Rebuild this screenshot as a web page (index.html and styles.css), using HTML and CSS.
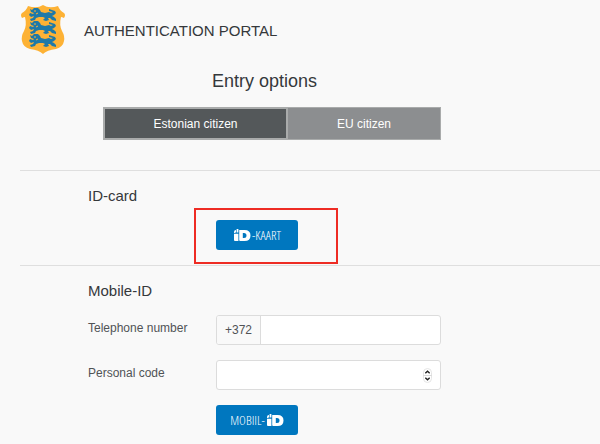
FILE: index.html
```html
<!DOCTYPE html>
<html lang="en">
<head>
<meta charset="utf-8">
<meta name="viewport" content="width=device-width, initial-scale=1">
<title>Authentication portal</title>
<link rel="stylesheet" href="styles.css">
</head>
<body>
<svg class="defs" aria-hidden="true">
  <symbol id="lion" viewBox="0 0 28 13">
    <path d="M1 1 L3 2 L5 0 L9 0 L11 2 L12 4 L16 5 L20 4 L22 5 L24 4 L20 3 L20 1 L23 2 L26 3 L27 5 L25 7 L23 8 L25 9 L27 11 L27 13 L23 12 L21 10 L19 10 L20 12 L17 13 L14 12 L16 10 L14 9 L10 9 L7 10 L6 12 L2 13 L1 11 L4 10 L5 8 L2 9 L0 7 L1 5 L4 6 L5 5 L2 4 Z"/>
    <path class="lion-line" d="M5 3 L7 3 M7 6 L9 5"/>
  </symbol>
  <symbol id="id-mark" viewBox="0 0 18 12">
    <path d="M1 3 Q1 1 3 1 V3 Q3 4 1 4 Z M3.600 0 H5.400 V3.400 H3.600 Z M1 4.800 H5.400 V12 H2 Q1 12 1 11 Z"/>
    <path fill-rule="evenodd" d="M6.200 1 H11.500 Q17.500 1 17.500 6.500 Q17.500 12 11.500 12 H7.200 Q6.200 12 6.200 11 Z M9.800 4 V9 H11 Q13.500 9 13.500 6.500 Q13.500 4 11 4 Z"/>
  </symbol>
</svg>
<header class="header">
  <svg class="crest" viewBox="0 0 46 50" aria-hidden="true">
    <path d="M8 1 Q17 4 23 0 Q29 4 38 1 Q40 6 44 8 Q46 10 44 13 Q42 12 41 12 Q39 20 42 26 Q45 31 44 36 Q43 42 36 44 Q27 45 23 49 Q19 45 10 44 Q3 42 2 36 Q1 31 4 26 Q7 20 5 12 Q4 12 2 13 Q0 10 2 8 Q6 6 8 1 Z"/>
    <use href="#lion" x="9" y="3" width="28" height="13"/>
    <use href="#lion" x="9" y="16" width="28" height="13"/>
    <use href="#lion" x="9" y="29" width="28" height="13"/>
  </svg>
  <span class="brand">AUTHENTICATION PORTAL</span>
</header>
<main>
  <h1 class="title">Entry options</h1>
  <nav class="tabs" aria-label="Entry options">
    <button type="button" class="tab tab-active">Estonian citizen</button>
    <button type="button" class="tab">EU citizen</button>
  </nav>
  <section class="section">
    <h2 class="heading">ID-card</h2>
    <div class="row">
      <div class="highlight">
        <button type="button" class="login"><svg class="mark" role="img" aria-label="ID"><use href="#id-mark"/></svg><span>-KAART</span></button>
      </div>
    </div>
  </section>
  <section class="section">
    <h2 class="heading">Mobile-ID</h2>
    <form class="form">
      <div class="row">
        <label class="label" for="phone">Telephone number</label>
        <div class="field">
          <span class="prefix">+372</span>
          <input class="input" id="phone" type="tel">
        </div>
      </div>
      <div class="row">
        <label class="label" for="code">Personal code</label>
        <div class="field">
          <input class="input" id="code" type="number">
          <svg class="stepper" viewBox="0 0 9 15" aria-hidden="true">
            <rect x="0.500" y="0.500" width="8" height="14" rx="4"/>
            <path class="divide" d="M0 7.500 H9"/>
            <path class="chevron" d="M2.300 5.200 L4.500 3.200 L6.700 5.200 M2.300 9.800 L4.500 11.800 L6.700 9.800"/>
          </svg>
        </div>
      </div>
      <div class="row">
        <button type="button" class="login"><span>MOBIIL-</span><svg class="mark" role="img" aria-label="ID"><use href="#id-mark"/></svg></button>
      </div>
    </form>
  </section>
</main>
</body>
</html>
```
FILE: styles.css
```css
* {
  box-sizing: border-box;
}

body {
  margin: 0;
  padding: 5px 0 8px 20px;
  background: #f9f9f9;
  color: #35383b;
  font-family: "Liberation Sans", Arial, sans-serif;
  font-size: 12px;
}

button,
input {
  font: inherit;
}

.defs {
  position: absolute;
  width: 0;
  height: 0;
}

.header {
  display: flex;
  align-items: center;
  gap: 18px;
}

.crest {
  width: 46px;
  height: 50px;
  fill: #fdb235;
}

.crest use {
  fill: #1e79a8;
}

.lion-line {
  fill: none;
  stroke: #fdb235;
}

.brand {
  font-size: 15px;
}

.title {
  max-width: 580px;
  margin: 16px 0;
  padding-right: 91px;
  font-size: 18px;
  font-weight: 400;
  line-height: 20px;
  text-align: center;
}

.tabs {
  display: grid;
  grid-template-columns: 185fr 153fr;
  max-width: 421px;
  padding-left: 83px;
}

.tab {
  height: 33px;
  padding: 0;
  border: 1px solid #a9abab;
  border-left: 0;
  background: #8c8e90;
  color: #fff;
}

.tab-active {
  border: 2px solid #a9abab;
  background: #54585a;
}

.section {
  margin-top: 30px;
  padding: 16px 0 0 68px;
  border-top: 1px solid #dfdfdf;
}

.section + .section {
  margin-top: 0;
}

.heading {
  margin: 0;
  font-size: 15px;
  font-weight: 400;
  line-height: 18px;
}

.row {
  display: grid;
  grid-template-columns: 128px minmax(0, 225px);
}

.highlight {
  grid-column: 2;
  width: 144px;
  margin: 3px 0 1px -22px;
  padding: 10px 20px 12px;
  border: 2px solid #ee2c24;
}

.login {
  display: flex;
  grid-column: 2;
  align-items: center;
  justify-content: center;
  justify-self: start;
  gap: 1px;
  width: 82px;
  height: 30px;
  padding: 0;
  border: 0;
  border-radius: 3px;
  background: #0077bf;
  color: #fff;
  font-family: "Open Sans Condensed Light", "Open Sans Condensed", "Open Sans", sans-serif;
  font-size: 13px;
  font-weight: 300;
}

.mark {
  width: 18px;
  height: 12px;
  fill: #fff;
}

.form {
  display: grid;
  gap: 15px;
  margin-top: 15px;
}

.label {
  padding-top: 5px;
  color: #505356;
  line-height: 16px;
}

.field {
  display: flex;
  position: relative;
  height: 30px;
  border: 1px solid #dcdcdc;
  border-radius: 3px;
  background: #fff;
  overflow: hidden;
}

.prefix {
  width: 44px;
  border-right: 1px solid #dcdcdc;
  background: #f9f9f9;
  color: #505356;
  line-height: 28px;
  text-align: center;
}

.input {
  flex: 1;
  min-width: 0;
  padding: 0 24px 0 8px;
  border: 0;
  background: transparent;
  appearance: textfield;
}

.stepper {
  position: absolute;
  top: 7px;
  right: 8px;
  width: 9px;
  height: 15px;
  pointer-events: none;
}

.stepper rect {
  fill: #fff;
  stroke: #e4e4e4;
}

.divide {
  stroke: #dadada;
}

.chevron {
  fill: none;
  stroke: #222;
  stroke-width: 1.400;
}
```
